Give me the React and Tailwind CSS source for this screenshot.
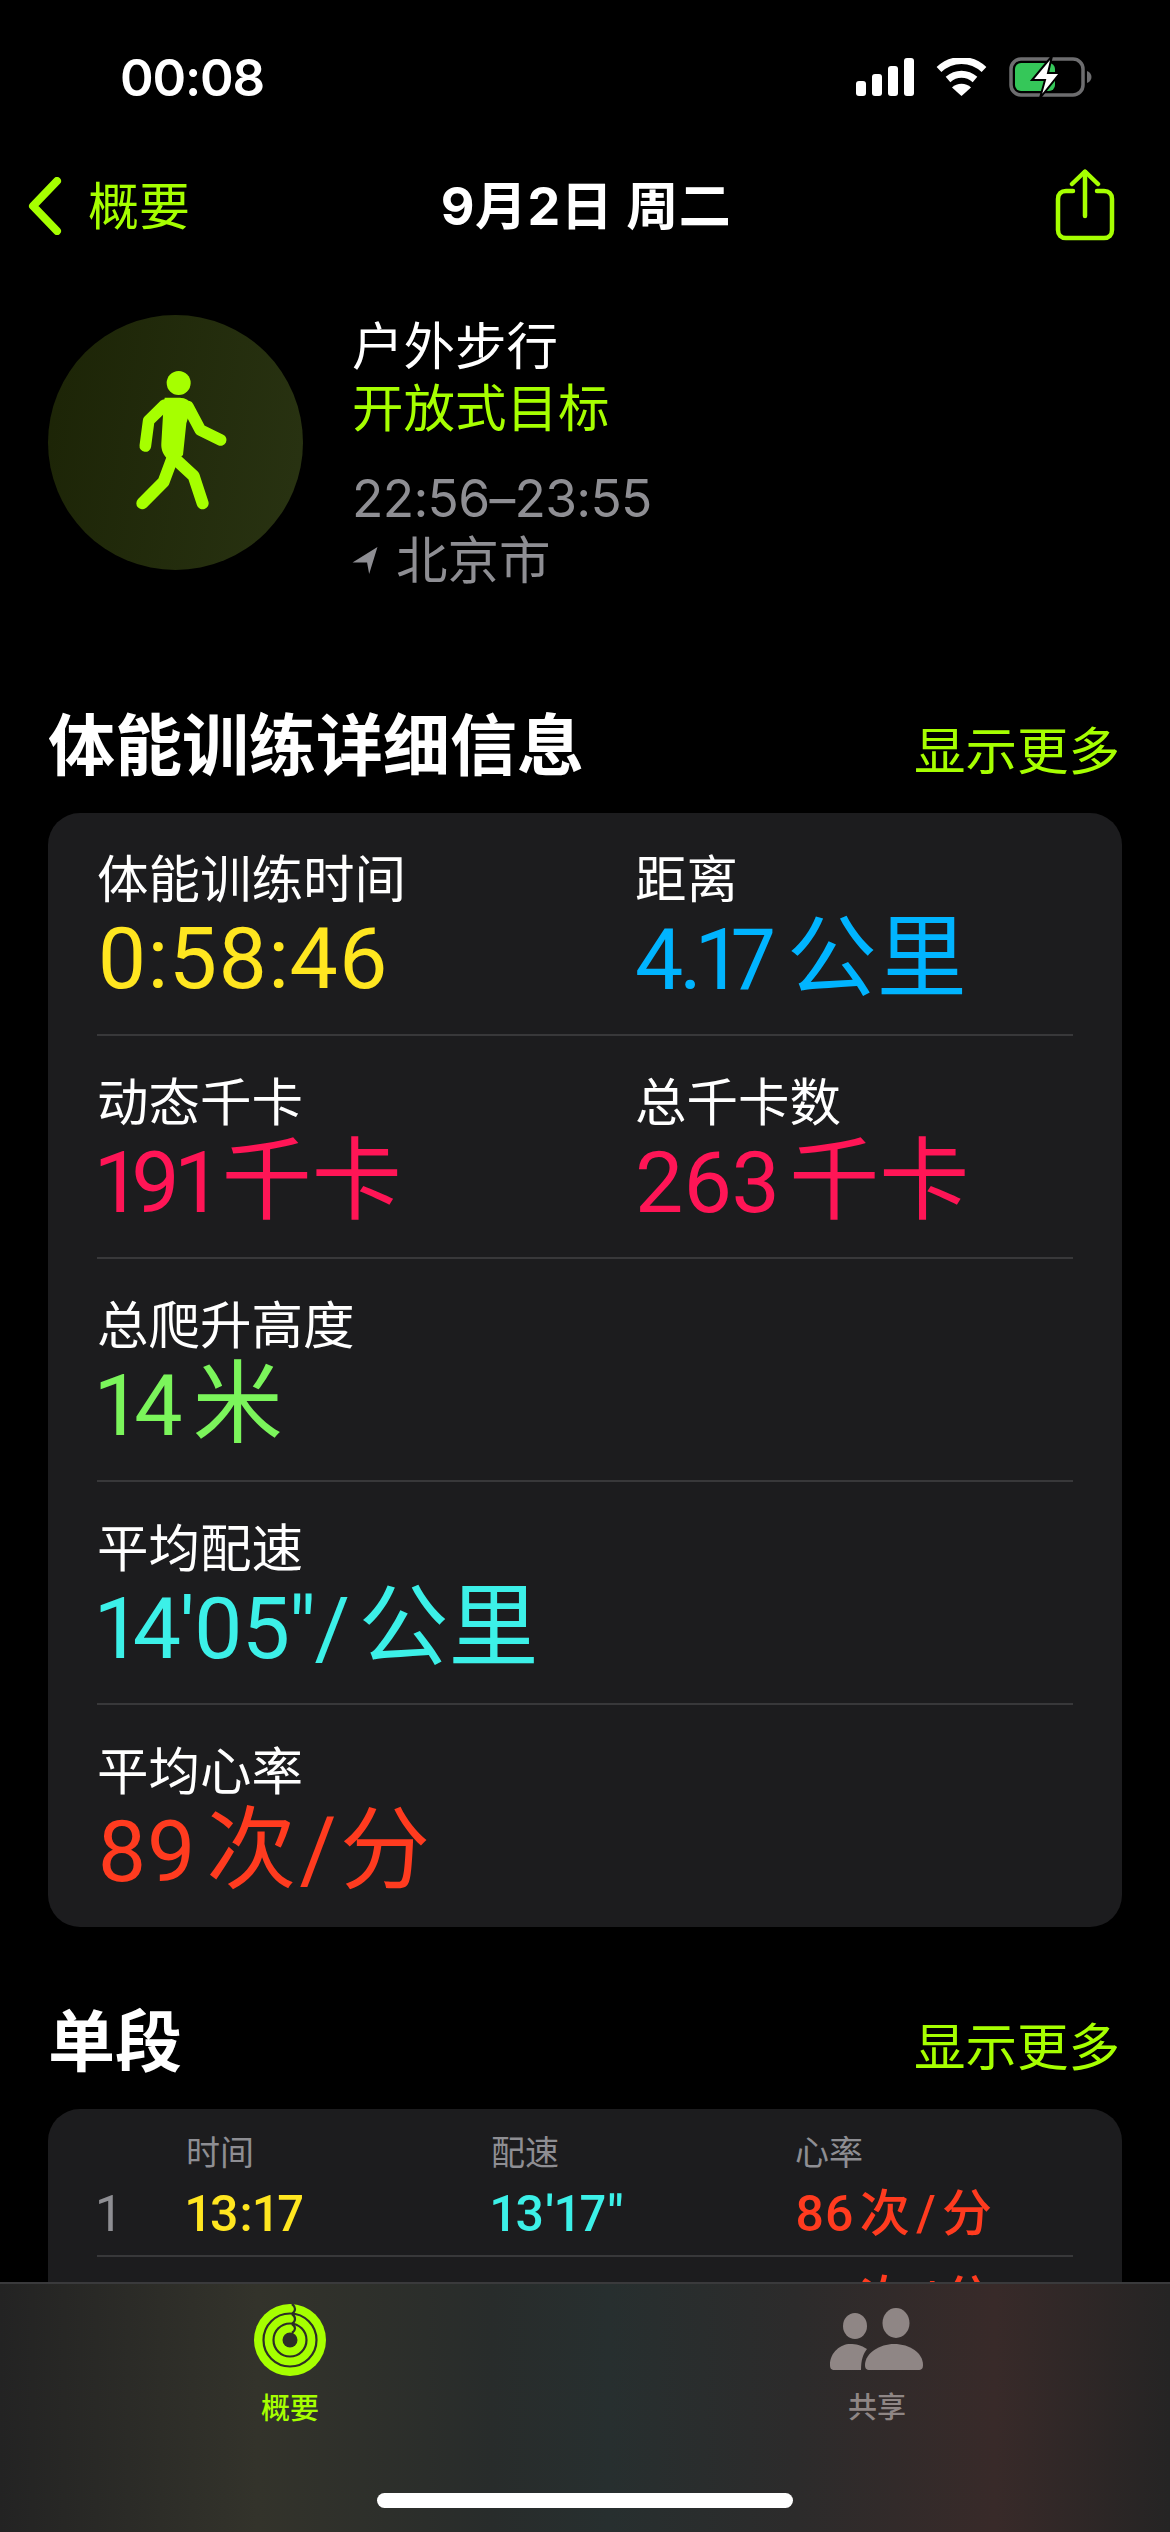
const CJK = "font-['Inter','Noto_Sans_CJK_SC',sans-serif]"
const NUM = "font-['Roboto','Noto_Sans_CJK_SC',sans-serif]"

function StatusIcons() {
  return (
    <div className="flex items-center">
      <svg width="58" height="38" viewBox="0 0 58 38" fill="#fff">
        <rect x="0" y="23" width="10" height="15" rx="3" />
        <rect x="16" y="16" width="10" height="22" rx="3" />
        <rect x="32" y="8" width="10" height="30" rx="3" />
        <rect x="48" y="0" width="10" height="38" rx="3" />
      </svg>
      <svg className="ml-[22px]" width="51" height="38" viewBox="0 0 51 38" fill="none" stroke="#fff" strokeWidth="7">
        <path d="M3 11.5C16 -0.5 35 -0.5 48 11.5" />
        <path d="M12 21.5C20 14.5 31 14.5 39 21.5" />
        <path d="M25.5 38 L16 29.5C21 24.5 30 24.5 35 29.5Z" fill="#fff" stroke="none" />
      </svg>
      <svg className="ml-[22px]" width="84" height="42" viewBox="0 0 84 42" fill="none">
        <rect x="2" y="3" width="72" height="36" rx="10" stroke="#6d6d6f" strokeWidth="3.5" />
        <rect x="6" y="7" width="40" height="28" rx="6" fill="#35c759" />
        <path d="M78 15C81 16 82.5 18.5 82.5 21C82.5 23.5 81 26 78 27Z" fill="#6d6d6f" />
        <path d="M43 0 L23 24 H36 L31 42 L51 17 H39 Z" fill="#fff" stroke="#000" strokeWidth="2" />
      </svg>
    </div>
  )
}

function ShareIcon() {
  return (
    <svg width="60" height="74" viewBox="0 0 60 74" fill="none" stroke="#a6ff00" strokeWidth="4.5" strokeLinecap="round">
      <path d="M18 22H11C6 22 3 25 3 30V61C3 66 6 69 11 69H49C54 69 57 66 57 61V30C57 25 54 22 49 22H42" />
      <path d="M30 3V47" />
      <path d="M17 15L30 2.5L43 15" strokeLinejoin="round" />
    </svg>
  )
}

function Walker() {
  return (
    <svg className="w-full h-full" viewBox="55 75 765 765" fill="none" stroke="#a6ff00" strokeLinecap="round" strokeLinejoin="round">
      <circle cx="447" cy="279" r="36" fill="#a6ff00" stroke="none" />
      <path d="M405 323H450C468 323 480 332 487 346L470 400L460 495C445 512 425 512 410 503C398 490 394 475 395 460L400 375Z" fill="#a6ff00" stroke="none" />
      <path d="M405 345L357 392L347 468" strokeWidth="35" />
      <path d="M475 350L512 420L573 450" strokeWidth="35" />
      <path d="M428 505L402 575L338 640" strokeWidth="36" />
      <path d="M440 510L492 558L519 640" strokeWidth="36" />
    </svg>
  )
}

function RingsIcon() {
  return (
    <svg width="72" height="72" viewBox="0 0 72 72" fill="none">
      <circle cx="36" cy="36" r="36" fill="#a6ff00" />
      <circle cx="36" cy="36" r="26.5" stroke="#2c2d27" strokeWidth="2.2" />
      <circle cx="36" cy="36" r="16.5" stroke="#2c2d27" strokeWidth="2.2" />
      <circle cx="36" cy="36" r="7.5" fill="#2c2d27" />
      <path d="M38 0C42 3 42 7 38 10" stroke="#2c2d27" strokeWidth="2.2" />
      <path d="M38 10C42 13 42 17 38 20" stroke="#2c2d27" strokeWidth="2.2" />
      <path d="M38 20C42 23 42 26 38 29" stroke="#2c2d27" strokeWidth="2.2" />
    </svg>
  )
}

function PeopleIcon() {
  return (
    <svg width="94" height="62" viewBox="0 0 94 62" fill="#8f8685">
      <ellipse cx="25" cy="13" rx="12" ry="13" transform="translate(0 5)" />
      <ellipse cx="66" cy="15" rx="13.5" ry="15" />
      <path d="M5 62C1 62 0 60 0 57C0 44 11 36 20 36C26 36 31 37 37 41C33 46 31 52 31 62Z" />
      <path d="M40 62C36 62 35 60 35 57C35 45 50 36 64 36C80 36 93 45 93 57C93 60 92 62 88 62Z" />
    </svg>
  )
}

// number + unit, unit glyphs run a bit bigger than the digits
function Metric({ label, num, unit, color, wide, numClass = '' }) {
  return (
    <div className={wide ? 'w-[538px] shrink-0' : 'flex-1 min-w-0'}>
      <div className={`text-[51.5px] leading-[60px] text-white ${CJK}`}>{label}</div>
      <div className={`mt-[5px] h-[90px] leading-[90px] whitespace-nowrap font-normal proportional-nums ${NUM} ${color}`}>
        <span className={`text-[86px] ${numClass}`}>{num}</span>
        {unit && <span className="ml-[10px] text-[90px] [word-spacing:-19px]">{unit}</span>}
      </div>
    </div>
  )
}

function MetricRow({ children, last }) {
  return (
    <div className={`h-[223px] pt-[36px] flex ${last ? '' : 'border-b-2 border-[#38383a]'}`}>
      {children}
    </div>
  )
}

function SectionHead({ title }) {
  return (
    <div className="flex items-center justify-between pl-[48px] pr-[50px] h-[86px]">
      <h2 className={`mt-[3px] text-[67px] leading-[86px] font-bold text-white ${CJK}`}>{title}</h2>
      <span className={`text-[51.5px] leading-[60px] mt-[14px] text-[#a6ff00] ${CJK}`}>显示更多</span>
    </div>
  )
}

function SplitRow({ index, time, pace, hr, className = '' }) {
  return (
    <div className={`flex items-center h-[83px] border-b-2 border-[#38383a] text-[50px] font-medium proportional-nums ${NUM} ${className}`}>
      <span className="w-[89px] text-[#8e8e93] font-normal">{index}</span>
      <span className="w-[305px] tracking-[1px] text-[#ffe620]">{time}</span>
      <span className="w-[304px] tracking-[1.5px] text-[#3cf0e8]">{pace}</span>
      <span className="[word-spacing:-6px] text-[#ff3b1f]">{hr}</span>
    </div>
  )
}

export default function App() {
  return (
    <div className={`relative w-[1170px] h-[2532px] overflow-hidden bg-black ${CJK}`}>
      {/* status bar */}
      <div className="flex items-center justify-between h-[154px] pl-[120px] pr-[77px]">
        <span className="mt-[2px] text-[51px] font-semibold tracking-[-1.2px] text-white">00:08</span>
        <StatusIcons />
      </div>

      {/* nav */}
      <div className="flex items-center h-[104px] pl-[28px] pr-[55px]">
        <div className="w-[329px] flex items-center">
          <svg width="34" height="58" viewBox="0 0 34 58" fill="none" stroke="#a6ff00" strokeWidth="8" strokeLinecap="round" strokeLinejoin="round">
            <path d="M29 4L5 29L29 54" />
          </svg>
          <span className="ml-[26px] mt-[2px] text-[51px] text-[#a6ff00]">概要</span>
        </div>
        <div className="flex-1 mt-[2px] text-center text-[52px] tracking-[0.5px] font-bold text-white">9月2日 周二</div>
        <div className="w-[300px] flex justify-end">
          <ShareIcon />
        </div>
      </div>

      {/* workout header */}
      <div className="flex items-start pl-[48px] mt-[57px]">
        <div className="w-[255px] h-[255px] rounded-full bg-[linear-gradient(100deg,#1c2406,#293312)]">
          <Walker />
        </div>
        <div className="ml-[49px] text-[51.5px] leading-[62px]">
          <div className="text-white">户外步行</div>
          <div className="text-[#a6ff00]">开放式目标</div>
          <div className="mt-[28px] tracking-[-0.7px] text-[#8e8e93]">22:56–23:55</div>
          <div className="flex items-center text-[#8e8e93]">
            <svg width="26" height="27" viewBox="0 0 24 26" fill="#8e8e93"><path d="M24 0L0 15H14L16 26Z" /></svg>
            <span className="ml-[18px]">北京市</span>
          </div>
        </div>
      </div>

      {/* details */}
      <div className="mt-[110px]">
        <SectionHead title="体能训练详细信息" />
        <div className="mx-[48px] mt-[26px] px-[49px] h-[1114px] rounded-[32px] bg-[#1c1c1e]">
          <MetricRow>
            <Metric wide label="体能训练时间" num="0:58:46" numClass="tracking-[0.5px]" color="text-[#ffe620]" />
            <Metric label="距离" num="4.17" unit="公里" numClass="tracking-[-4px] mr-[5px]" color="text-[#00b4ff]" />
          </MetricRow>
          <MetricRow>
            <Metric wide label="动态千卡" num="191" unit="千卡" numClass="tracking-[-3px]" color="text-[#ff1556]" />
            <Metric label="总千卡数" num="263" unit="千卡" numClass="tracking-[-0.5px]" color="text-[#ff1556]" />
          </MetricRow>
          <MetricRow>
            <Metric label="总爬升高度" num="14" unit="米" color="text-[#7bf55b]" />
          </MetricRow>
          <MetricRow>
            <Metric label="平均配速" num={`14'05"/`} unit="公里" numClass="tracking-[-1.5px]" color="text-[#3cf0e8]" />
          </MetricRow>
          <MetricRow last>
            <Metric label="平均心率" num="89" unit="次 / 分" color="text-[#ff3b1f]" />
          </MetricRow>
        </div>
      </div>

      {/* splits */}
      <div className="mt-[70px]">
        <SectionHead title="单段" />
        <div className="mx-[48px] mt-[26px] px-[49px] rounded-[32px] bg-[#1c1c1e]">
          <div className="flex pt-[22px] h-[65px] text-[34px] leading-[44px] text-[#8e8e93]">
            <span className="w-[89px]" />
            <span className="w-[305px]">时间</span>
            <span className="w-[304px]">配速</span>
            <span>心率</span>
          </div>
          <SplitRow index="1" time="13:17" pace={`13'17"`} hr="86 次 / 分" />
          {/* next row is almost fully behind the tab bar, only the tops of the unit show */}
          <SplitRow hr={<><span className="invisible">86 </span>次 / 分</>} className="pt-[6px]" />
        </div>
      </div>

      {/* tab bar */}
      <div className="absolute left-0 right-0 bottom-0 h-[250px] border-t-2 border-[#3a3a3c] bg-[linear-gradient(90deg,#232323_0%,#33332b_22%,#282c2b_42%,#272f2f_52%,#2c2b2b_68%,#382a29_85%,#252424_100%)]">
        <div className="absolute left-[254px] top-[20px] flex flex-col items-center w-[72px]">
          <RingsIcon />
          <span className="mt-[15px] text-[29px] leading-[36px] font-medium text-[#a6ff00] whitespace-nowrap">概要</span>
        </div>
        <div className="absolute left-[830px] top-[24px] flex flex-col items-center w-[94px]">
          <PeopleIcon />
          <span className="mt-[20px] text-[29px] leading-[36px] font-medium text-[#8f8685] whitespace-nowrap">共享</span>
        </div>
        <div className="absolute left-[377px] bottom-[24px] w-[416px] h-[15px] rounded-full bg-white" />
      </div>
    </div>
  )
}
